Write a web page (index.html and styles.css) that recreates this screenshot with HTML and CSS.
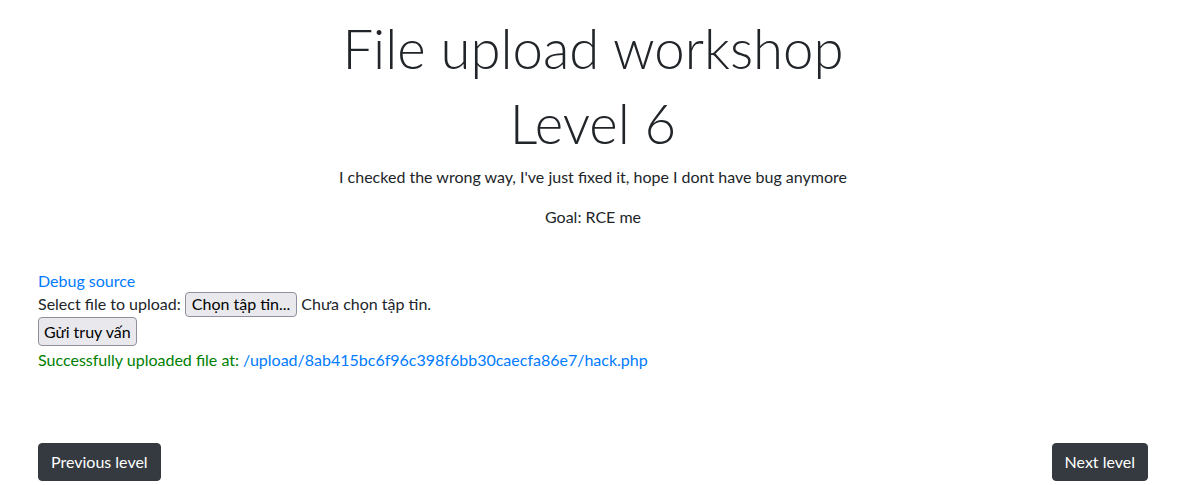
FILE: index.html
```html
<!DOCTYPE html>
<html lang="vi">
<head>
<meta charset="utf-8">
<title>File upload workshop - Level 6</title>
<link rel="stylesheet" href="styles.css">
</head>
<body>
<div class="container">
  <header class="intro">
    <h1 class="display">File upload workshop</h1>
    <h1 class="display">Level 6</h1>
    <p class="lead-text">I checked the wrong way, I've just fixed it, hope I dont have bug anymore</p>
    <p class="lead-text">Goal: RCE me</p>
  </header>
  <section class="upload">
    <a class="link" href="#">Debug source</a>
    <form class="upload-form">
      <div class="file-row">
        <span>Select file to upload:</span>
        <button type="button" class="native-btn file-btn">Chọn tập tin...</button>
        <span>Chưa chọn tập tin.</span>
      </div>
      <div class="submit-row">
        <button type="button" class="native-btn submit-btn">Gửi truy vấn</button>
      </div>
    </form>
    <div class="success">Successfully uploaded file at: <a class="link" href="#">/upload/8ab415bc6f96c398f6bb30caecfa86e7/hack.php</a></div>
  </section>
  <nav class="pager">
    <a class="btn-dark" href="#">Previous level</a>
    <a class="btn-dark" href="#">Next level</a>
  </nav>
</div>
</body>
</html>
```
FILE: styles.css
```css
html, body {
  margin: 0;
  padding: 0;
  background: #fff;
}
body {
  font-family: "Lato", "Noto Sans", sans-serif;
  font-size: 16px;
  line-height: 1.5;
  color: #212529;
}
.container {
  width: 1110px;
  margin-left: 38px;
}
.intro {
  text-align: center;
  padding-top: 15px;
}
.display {
  font-size: 54.5px;
  font-weight: 300;
  line-height: 67px;
  margin: 0 0 8px;
}
.lead-text {
  margin: 0 0 16px;
}
.upload {
  margin-top: 40px;
}
.link {
  color: #007bff;
  text-decoration: none;
}
.upload > .link {
  display: block;
}
.upload-form {
  margin: 0;
}
.file-row {
  display: flex;
  align-items: center;
  gap: 4px;
  height: 22px;
}
.native-btn {
  font-family: inherit;
  font-size: 16px;
  color: #000;
  background: #e9e9ed;
  border: 1px solid #8f8f9d;
  border-radius: 4px;
  padding: 0 6px;
  line-height: 1.2;
}
.file-btn {
  height: 25px;
  flex: none;
}
.submit-row {
  padding-top: 2px;
}
.submit-btn {
  height: 29px;
  padding: 0 5px;
}
.success {
  color: #008000;
  margin-top: 2px;
}
.pager {
  display: flex;
  justify-content: space-between;
  margin-top: 71px;
}
.btn-dark {
  display: inline-block;
  background: #343a40;
  color: #fff;
  border: 1px solid #343a40;
  border-radius: 4px;
  padding: 6px 12px;
  line-height: 24px;
  text-decoration: none;
}
```
